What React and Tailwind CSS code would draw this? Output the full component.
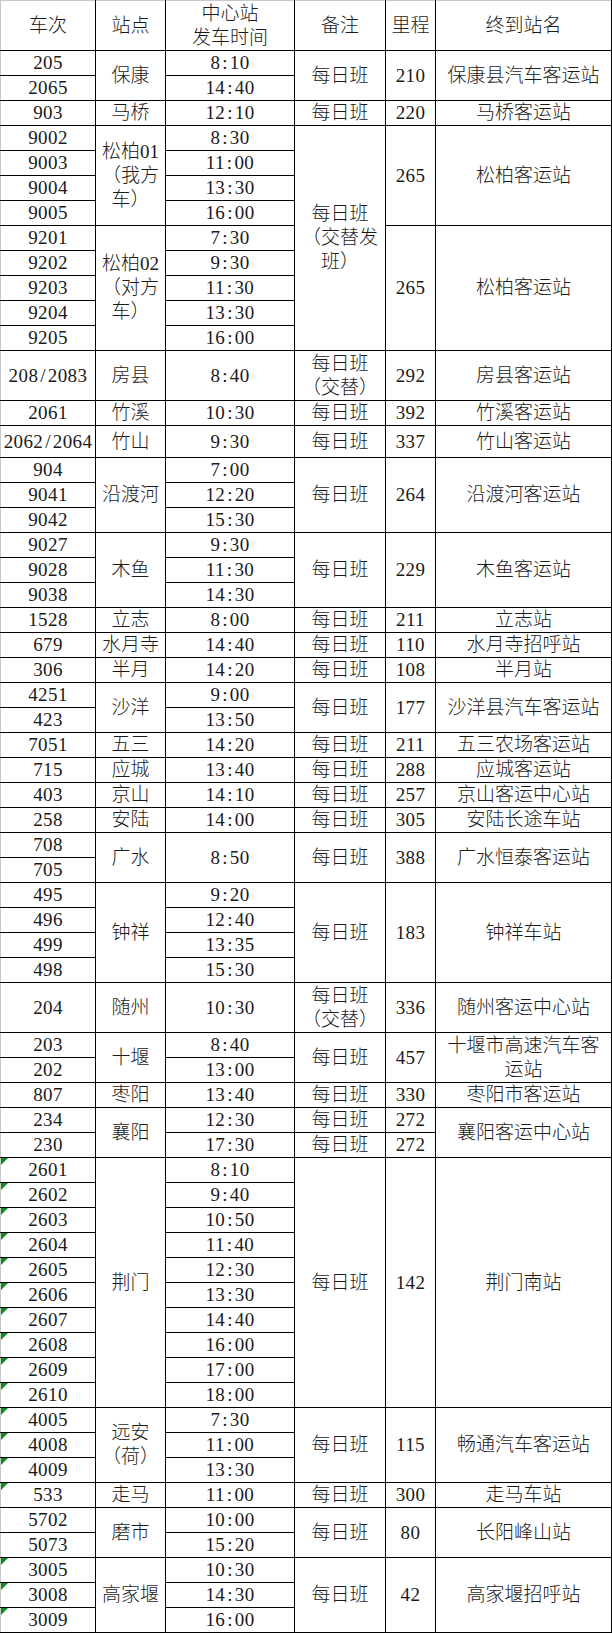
import React from "react";

// 每行：车次、站点、发车时间、备注、里程、终到站名（合并单元格用 r 表示跨行数）
const rows = [
  { c: ["205", { t: "保康", r: 2 }, "8:10", { t: "每日班", r: 2 }, { t: "210", r: 2 }, { t: "保康县汽车客运站", r: 2 }] },
  { c: ["2065", "14:40"] },
  { c: ["903", "马桥", "12:10", "每日班", "220", "马桥客运站"] },
  { c: ["9002", { t: ["松柏01", "（我方", "车）"], r: 4 }, "8:30", { t: ["每日班", "（交替发", "班）"], r: 9 }, { t: "265", r: 4 }, { t: "松柏客运站", r: 4 }] },
  { c: ["9003", "11:00"] },
  { c: ["9004", "13:30"] },
  { c: ["9005", "16:00"] },
  { c: ["9201", { t: ["松柏02", "（对方", "车）"], r: 5 }, "7:30", { t: "265", r: 5 }, { t: "松柏客运站", r: 5 }] },
  { c: ["9202", "9:30"] },
  { c: ["9203", "11:30"] },
  { c: ["9204", "13:30"] },
  { c: ["9205", "16:00"] },
  { c: ["208/2083", "房县", "8:40", ["每日班", "（交替）"], "292", "房县客运站"], h: "tall" },
  { c: ["2061", "竹溪", "10:30", "每日班", "392", "竹溪客运站"] },
  { c: ["2062/2064", "竹山", "9:30", "每日班", "337", "竹山客运站"], h: "mid" },
  { c: ["904", { t: "沿渡河", r: 3 }, "7:00", { t: "每日班", r: 3 }, { t: "264", r: 3 }, { t: "沿渡河客运站", r: 3 }] },
  { c: ["9041", "12:20"] },
  { c: ["9042", "15:30"] },
  { c: ["9027", { t: "木鱼", r: 3 }, "9:30", { t: "每日班", r: 3 }, { t: "229", r: 3 }, { t: "木鱼客运站", r: 3 }] },
  { c: ["9028", "11:30"] },
  { c: ["9038", "14:30"] },
  { c: ["1528", "立志", "8:00", "每日班", "211", "立志站"] },
  { c: ["679", "水月寺", "14:40", "每日班", "110", "水月寺招呼站"] },
  { c: ["306", "半月", "14:20", "每日班", "108", "半月站"] },
  { c: ["4251", { t: "沙洋", r: 2 }, "9:00", { t: "每日班", r: 2 }, { t: "177", r: 2 }, { t: "沙洋县汽车客运站", r: 2 }] },
  { c: ["423", "13:50"] },
  { c: ["7051", "五三", "14:20", "每日班", "211", "五三农场客运站"] },
  { c: ["715", "应城", "13:40", "每日班", "288", "应城客运站"] },
  { c: ["403", "京山", "14:10", "每日班", "257", "京山客运中心站"] },
  { c: ["258", "安陆", "14:00", "每日班", "305", "安陆长途车站"] },
  { c: ["708", { t: "广水", r: 2 }, { t: "8:50", r: 2 }, { t: "每日班", r: 2 }, { t: "388", r: 2 }, { t: "广水恒泰客运站", r: 2 }] },
  { c: ["705"] },
  { c: ["495", { t: "钟祥", r: 4 }, "9:20", { t: "每日班", r: 4 }, { t: "183", r: 4 }, { t: "钟祥车站", r: 4 }] },
  { c: ["496", "12:40"] },
  { c: ["499", "13:35"] },
  { c: ["498", "15:30"] },
  { c: ["204", "随州", "10:30", ["每日班", "（交替）"], "336", "随州客运中心站"], h: "tall" },
  { c: ["203", { t: "十堰", r: 2 }, "8:40", { t: "每日班", r: 2 }, { t: "457", r: 2 }, { t: ["十堰市高速汽车客", "运站"], r: 2 }] },
  { c: ["202", "13:00"] },
  { c: ["807", "枣阳", "13:40", "每日班", "330", "枣阳市客运站"] },
  { c: ["234", { t: "襄阳", r: 2 }, "12:30", "每日班", "272", { t: "襄阳客运中心站", r: 2 }] },
  { c: ["230", "17:30", "每日班", "272"] },
  { c: ["2601", { t: "荆门", r: 10 }, "8:10", { t: "每日班", r: 10 }, { t: "142", r: 10 }, { t: "荆门南站", r: 10 }], g: true },
  { c: ["2602", "9:40"], g: true },
  { c: ["2603", "10:50"], g: true },
  { c: ["2604", "11:40"], g: true },
  { c: ["2605", "12:30"], g: true },
  { c: ["2606", "13:30"], g: true },
  { c: ["2607", "14:40"], g: true },
  { c: ["2608", "16:00"], g: true },
  { c: ["2609", "17:00"], g: true },
  { c: ["2610", "18:00"], g: true },
  { c: ["4005", { t: ["远安", "（荷）"], r: 3 }, "7:30", { t: "每日班", r: 3 }, { t: "115", r: 3 }, { t: "畅通汽车客运站", r: 3 }], g: true },
  { c: ["4008", "11:00"], g: true },
  { c: ["4009", "13:30"], g: true },
  { c: ["533", "走马", "11:00", "每日班", "300", "走马车站"], g: true },
  { c: ["5702", { t: "磨市", r: 2 }, "10:00", { t: "每日班", r: 2 }, { t: "80", r: 2 }, { t: "长阳峰山站", r: 2 }] },
  { c: ["5073", "15:20"] },
  { c: ["3005", { t: "高家堰", r: 3 }, "10:30", { t: "每日班", r: 3 }, { t: "42", r: 3 }, { t: "高家堰招呼站", r: 3 }], g: true },
  { c: ["3008", "14:30"], g: true },
  { c: ["3009", "16:00"], g: true },
];

const heights = {
  tall: "h-[50px]",
  mid: "h-[32px]",
  normal: "h-[25px]",
};

// 数字按半角等宽排：冒号和斜杠占一个数字宽度
const Num = ({ s }) => (
  <span className="tracking-[0.4px]">
    {s.split(/([:/])/).map((part, i) =>
      part === ":" || part === "/" ? (
        <span key={i} className="inline-block w-[9.5px] text-center">
          {part}
        </span>
      ) : (
        <span key={i}>{part}</span>
      )
    )}
  </span>
);

const Text = ({ s }) => (/^[0-9:/]+$/.test(s) ? <Num s={s} /> : s);

const Lines = ({ t }) =>
  Array.isArray(t) ? (
    t.map((line, i) => (
      <div key={i} className="leading-[24px]">
        <Text s={line} />
      </div>
    ))
  ) : (
    <Text s={t} />
  );

const App = () => {
  const headers = ["车次", "站点", ["中心站", "发车时间"], "备注", "里程", "终到站名"];

  return (
    <div className="w-[612px] min-h-[1633px] bg-white text-[#1a1a1a] text-[19px] leading-[24px] font-light font-['Liberation_Serif','Noto_Sans_CJK_SC',serif]">
      <table className="table-fixed border-collapse w-[611px]">
        <colgroup>
          <col className="w-[95px]" />
          <col className="w-[70px]" />
          <col className="w-[129px]" />
          <col className="w-[91px]" />
          <col className="w-[50px]" />
          <col className="w-[176px]" />
        </colgroup>
        <thead>
          <tr className="h-[50px]">
            {headers.map((h, i) => (
              <th
                key={i}
                className={
                  "border border-black border-t-[#c8c8c8] font-light p-0 text-center align-middle " +
                  (i === 0 ? "border-l-[#c8c8c8]" : "")
                }
              >
                <Lines t={h} />
              </th>
            ))}
          </tr>
        </thead>
        <tbody>
          {rows.map((row, ri) => (
            <tr key={ri} className={heights[row.h || "normal"]}>
              {row.c.map((cell, ci) => {
                const isObj = cell && typeof cell === "object" && !Array.isArray(cell);
                const text = isObj ? cell.t : cell;
                return (
                  <td
                    key={ci}
                    rowSpan={isObj ? cell.r : undefined}
                    className={
                      "border border-black p-0 text-center align-middle whitespace-nowrap " +
                      (ci === 0 ? "relative border-l-[#c8c8c8]" : "")
                    }
                  >
                    {ci === 0 && row.g && (
                      <span className="absolute top-0 left-0 w-0 h-0 border-t-[7px] border-r-[7px] border-t-[#0f8a1f] border-r-transparent" />
                    )}
                    <Lines t={text} />
                  </td>
                );
              })}
            </tr>
          ))}
        </tbody>
      </table>
    </div>
  );
};

export default App;
